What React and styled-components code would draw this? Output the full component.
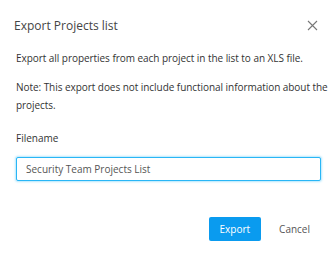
import React from "react";
import styled, { createGlobalStyle } from "styled-components";

const GlobalStyle = createGlobalStyle`
  body {
    margin: 0;
    background: #ffffff;
    font-family: "Open Sans", "Noto Sans", sans-serif;
  }
`;

const Dialog = styled.div`
  width: 336px;
  height: 254px;
  box-sizing: border-box;
  background: #fff;
  display: flex;
  flex-direction: column;
`;

const Header = styled.div`
  display: flex;
  align-items: center;
  justify-content: space-between;
  padding: 16px 18px 0 14px;
  height: 18px;
`;

const Title = styled.h2`
  margin: 0;
  font-size: 12px;
  font-weight: 400;
  color: #444;
`;

const CloseButton = styled.button`
  border: none;
  background: none;
  padding: 0;
  width: 11px;
  height: 11px;
  display: flex;
  cursor: pointer;
`;

const Body = styled.div`
  padding: 15px 15px 0 16px;
  color: #333;
  font-size: 10px;
  line-height: 18px;
`;

const Paragraph = styled.p`
  margin: 0 -17px 11px 0;
  letter-spacing: -0.05px;
`;

const Label = styled.label`
  display: block;
  margin-top: 15px;
  margin-bottom: 10px;
`;

const Input = styled.input`
  width: 100%;
  box-sizing: border-box;
  height: 24px;
  border: 1px solid #29b6f6;
  box-shadow: 0 0 2px 1px rgba(41, 182, 246, 0.35);
  border-radius: 2px;
  padding: 0 9px;
  font-family: inherit;
  font-size: 10px;
  color: #555;
  outline: none;
`;

const Footer = styled.div`
  display: flex;
  justify-content: flex-end;
  align-items: center;
  gap: 10px;
  padding: 36px 18px 0;
`;

const Button = styled.button`
  height: 24px;
  padding: 0 ${(p) => (p.$primary ? "11px" : "8px")};
  border: none;
  border-radius: 2px;
  font-family: inherit;
  font-size: 10px;
  background: ${(p) => (p.$primary ? "#0a9bef" : "transparent")};
  color: ${(p) => (p.$primary ? "#fff" : "#555")};
  cursor: pointer;
`;

export default function App() {
  return (
    <>
      <GlobalStyle />
      <Dialog>
        <Header>
          <Title>Export Projects list</Title>
          <CloseButton aria-label="Close">
            <svg width="11" height="11" viewBox="0 0 11 11">
              <path d="M1 1L10 10M10 1L1 10" stroke="#777" strokeWidth="1.1" />
            </svg>
          </CloseButton>
        </Header>
        <Body>
          <Paragraph>
            Export all properties from each project in the list to an XLS file.
          </Paragraph>
          <Paragraph>
            Note: This export does not include functional information about the
            projects.
          </Paragraph>
          <Label htmlFor="filename">Filename</Label>
          <Input id="filename" defaultValue="Security Team Projects List" />
        </Body>
        <Footer>
          <Button $primary>Export</Button>
          <Button>Cancel</Button>
        </Footer>
      </Dialog>
    </>
  );
}
